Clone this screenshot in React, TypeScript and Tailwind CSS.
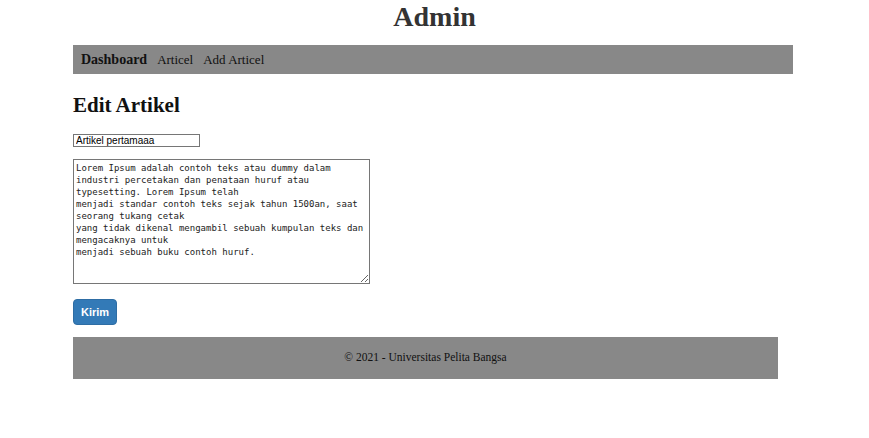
import React from 'react';

const articleBody = `Lorem Ipsum adalah contoh teks atau dummy dalam industri percetakan dan penataan huruf atau typesetting. Lorem Ipsum telah
menjadi standar contoh teks sejak tahun 1500an, saat seorang tukang cetak
yang tidak dikenal mengambil sebuah kumpulan teks dan mengacaknya untuk
menjadi sebuah buku contoh huruf.`;

const App: React.FC = () => {
  return (
    <div className="min-h-[438px] bg-white font-['Liberation_Serif',serif] text-[#111]">
      {/* Header */}
      <header className="pt-[2px] h-[45px]">
        <h1 className="text-center text-[28px] leading-[30px] font-bold text-[#333]">Admin</h1>
      </header>

      <div className="ml-[73px] w-[720px]">
        {/* Nav */}
        <nav className="h-[29px] bg-[#888888] flex items-center px-[8px] text-[13px] leading-[16px]">
          <a className="font-bold text-[14px] mr-[10px]">Dashboard</a>
          <a className="mr-[10px]">Articel</a>
          <a>Add Articel</a>
        </nav>

        {/* Form */}
        <section className="pt-[19px]">
          <h2 className="text-[21px] leading-[24px] font-bold">Edit Artikel</h2>
          <form className="mt-[17px] flex flex-col items-start">
            <input
              type="text"
              defaultValue="Artikel pertamaaa"
              className="w-[127px] h-[13px] border border-[#767676] px-[2px] text-[10px] leading-[11px] font-['Liberation_Sans',sans-serif] text-black outline-none"
            />
            <textarea
              defaultValue={articleBody}
              className="mt-[12px] w-[297px] h-[125px] border border-[#767676] p-[2px] text-[9px] leading-[12px] font-['DejaVu_Sans_Mono',monospace] text-[#222] outline-none resize"
            />
            <button
              type="button"
              className="mt-[15px] w-[44px] h-[26px] rounded-[4px] bg-[#337ab7] border border-[#2e6da4] text-white text-[11px] font-bold font-['Liberation_Sans',sans-serif]"
            >
              Kirim
            </button>
          </form>
        </section>

        {/* Footer */}
        <footer className="mt-[12px] w-[705px] h-[42px] bg-[#888888] flex items-center justify-center text-[11.5px]">
          © 2021 - Universitas Pelita Bangsa
        </footer>
      </div>
    </div>
  );
};

export default App;
